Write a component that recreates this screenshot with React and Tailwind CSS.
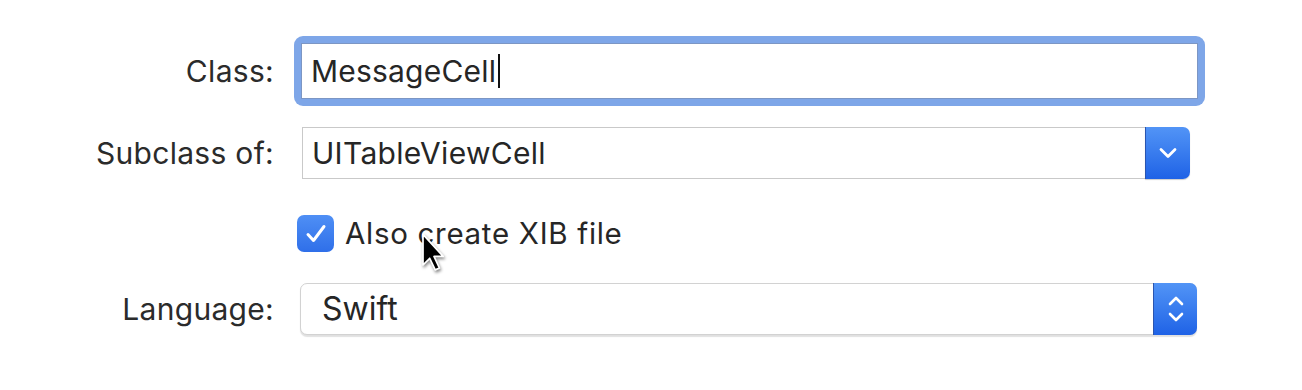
import React from "react";

const labelCls = "w-[274px] shrink-0 text-right text-[30px] tracking-[0.3px] text-[#2b2b2b] leading-none";

const ChevronDown = () => (
  <svg width="20" height="12" viewBox="0 0 20 12" fill="none">
    <path d="M3 2.5 L10 9.5 L17 2.5" stroke="white" strokeWidth="2.8" strokeLinecap="round" strokeLinejoin="round" />
  </svg>
);

const UpDown = () => (
  <svg width="18" height="30" viewBox="0 0 18 30" fill="none">
    <path d="M3 10 L9 4 L15 10" stroke="white" strokeWidth="2.6" strokeLinecap="round" strokeLinejoin="round" />
    <path d="M3 20 L9 26 L15 20" stroke="white" strokeWidth="2.6" strokeLinecap="round" strokeLinejoin="round" />
  </svg>
);

const Cursor = () => (
  <svg
    className="absolute left-[420px] top-[232px] drop-shadow-[1px_2px_1.5px_rgba(0,0,0,0.45)]"
    width="28"
    height="44"
    viewBox="0 0 22 36"
  >
    <path
      d="M2 2 L2 27 L7.5 21.5 L12 31 L15.5 29.5 L11 20 L18.5 20 Z"
      fill="black"
      stroke="white"
      strokeWidth="1.4"
      strokeLinejoin="round"
    />
  </svg>
);

export default function App() {
  return (
    <div
      className="relative w-full h-[390px] bg-white overflow-hidden"
      style={{ fontFamily: "Inter, 'Liberation Sans', sans-serif" }}
    >
      <div className="flex flex-col pt-[36px]">
        {/* Class */}
        <div className="flex items-center">
          <div className={labelCls}>Class:</div>
          <div className="ml-[20px] w-[911px] h-[70px] rounded-[9px] bg-[#7ea6e8] p-[7px]">
            <div className="h-full w-full bg-white border border-[#7c96c4] flex items-center pl-[9px]">
              <span className="text-[30px] tracking-[0.2px] text-[#262626] leading-none">MessageCell</span>
              <span className="ml-[2px] w-[2px] h-[34px] bg-[#111]" />
            </div>
          </div>
        </div>

        {/* Subclass of */}
        <div className="flex items-center mt-[21px]">
          <div className={labelCls}>Subclass of:</div>
          <div className="ml-[28px] w-[888px] h-[52px] flex">
            <div className="flex-1 border border-[#c9c9c9] border-r-0 bg-white flex items-center pl-[9px]">
              <span className="text-[30px] tracking-[0.3px] text-[#262626] leading-none">UITableViewCell</span>
            </div>
            <div className="w-[45px] h-full rounded-r-[7px] bg-gradient-to-b from-[#5294f6] to-[#1f62e6] border-l border-[#2a55b0] flex items-center justify-center shadow-[0_1px_1px_rgba(0,0,0,0.2)]">
              <ChevronDown />
            </div>
          </div>
        </div>

        {/* Checkbox */}
        <div className="flex items-center mt-[36px] ml-[297px]">
          <div className="w-[37px] h-[37px] rounded-[7px] bg-gradient-to-b from-[#4f8ff5] to-[#2f6fe9] flex items-center justify-center">
            <svg width="24" height="22" viewBox="0 0 24 22" fill="none">
              <path d="M4 11.5 L9.5 17.5 L20 3.5" stroke="white" strokeWidth="3" strokeLinecap="round" strokeLinejoin="round" />
            </svg>
          </div>
          <span className="ml-[11px] text-[29.5px] tracking-[0.7px] text-[#262626] leading-none">Also create XIB file</span>
        </div>

        {/* Language */}
        <div className="flex items-center mt-[31px]">
          <div className={labelCls}>Language:</div>
          <div className="ml-[26px] w-[897px] h-[52px] flex rounded-[7px] border border-[#d2d2d2] shadow-[0_1.5px_1px_rgba(0,0,0,0.12)] bg-white">
            <div className="flex-1 flex items-center pl-[21px]">
              <span className="text-[32px] text-[#262626] leading-none">Swift</span>
            </div>
            <div className="w-[44px] -my-px -mr-px rounded-r-[7px] bg-gradient-to-b from-[#5294f6] to-[#1f62e6] border-l border-[#2a55b0] flex items-center justify-center">
              <UpDown />
            </div>
          </div>
        </div>
      </div>

      <Cursor />
    </div>
  );
}
